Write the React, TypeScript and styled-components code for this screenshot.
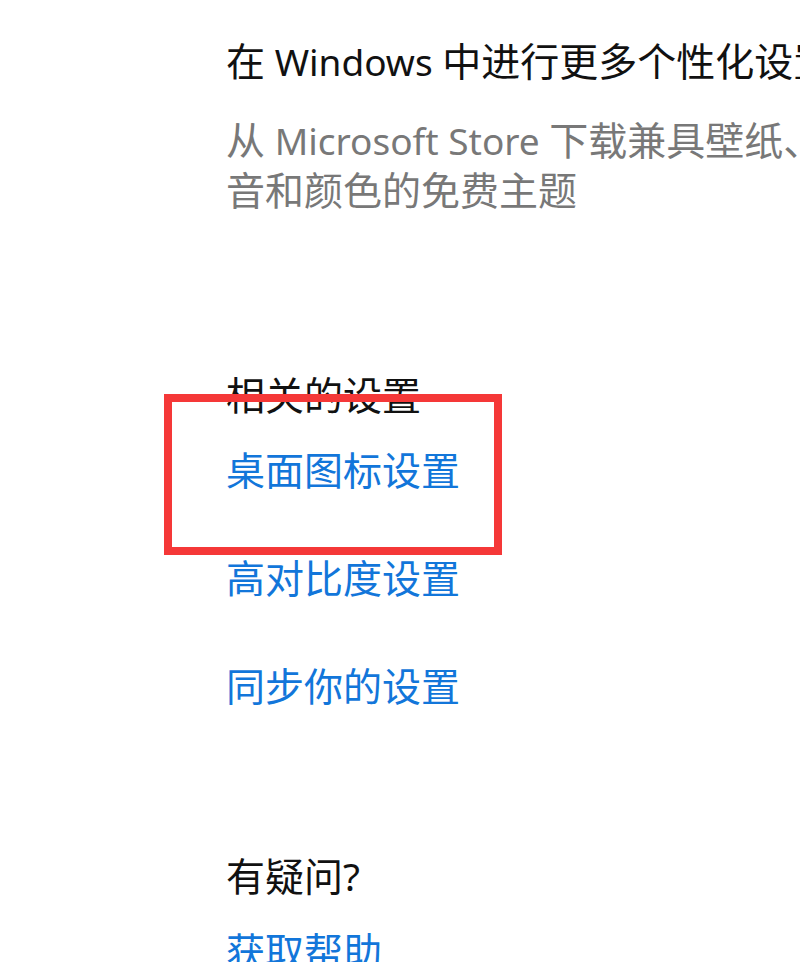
import React from "react";
import styled, { createGlobalStyle } from "styled-components";

const GlobalStyle = createGlobalStyle`
  html, body {
    margin: 0;
    padding: 0;
    background: #ffffff;
    overflow: hidden;
  }
  body {
    font-family: "Noto Sans", "Noto Sans CJK SC", sans-serif;
  }
`;

const Page = styled.div`
  position: relative;
  width: 800px;
  height: 962px;
  overflow: hidden;
  padding: 36px 0 0 226px;
  box-sizing: border-box;
  display: flex;
  flex-direction: column;
  font-size: 39px;
  line-height: 50px;
`;

const Title = styled.div`
  color: #111;
  white-space: nowrap;
`;

const Description = styled.div`
  color: #787878;
  white-space: nowrap;
  margin-top: 29px;
`;

// latin words run a touch narrower than the CJK glyphs in the original
const Latin = styled.span`
  font-size: 37px;
  line-height: 1;
`;

const Section = styled.section<{ top: number }>`
  display: flex;
  flex-direction: column;
  margin-top: ${({ top }) => top}px;
`;

const Heading = styled.div`
  color: #111;
  white-space: nowrap;
`;

const LinkList = styled.div`
  display: flex;
  flex-direction: column;
  gap: 58px;
  margin-top: 25px;
`;

const LinkItem = styled.a`
  position: relative;
  color: #1276da;
  text-decoration: none;
  white-space: nowrap;
  align-self: flex-start;
`;

// red annotation frame drawn over the first link
const Highlight = styled.span`
  position: absolute;
  left: -62px;
  top: -51px;
  width: 338px;
  height: 161px;
  box-sizing: border-box;
  border: 8px solid #f53838;
  pointer-events: none;
`;

const related = ["桌面图标设置", "高对比度设置", "同步你的设置"];

export default function App() {
  return (
    <>
      <GlobalStyle />
      <Page>
        <Title>
          在<Latin> Windows </Latin>中进行更多个性化设置
        </Title>
        <Description>
          从<Latin> Microsoft Store </Latin>下载兼具壁纸、声
          <br />
          音和颜色的免费主题
        </Description>

        <Section top={155}>
          <Heading>相关的设置</Heading>
          <LinkList>
            {related.map((label, i) => (
              <LinkItem key={label} href="#">
                {label}
                {i === 0 ? <Highlight /> : null}
              </LinkItem>
            ))}
          </LinkList>
        </Section>

        <Section top={140}>
          <Heading>有疑问?</Heading>
          <LinkList>
            <LinkItem href="#">获取帮助</LinkItem>
          </LinkList>
        </Section>
      </Page>
    </>
  );
}
